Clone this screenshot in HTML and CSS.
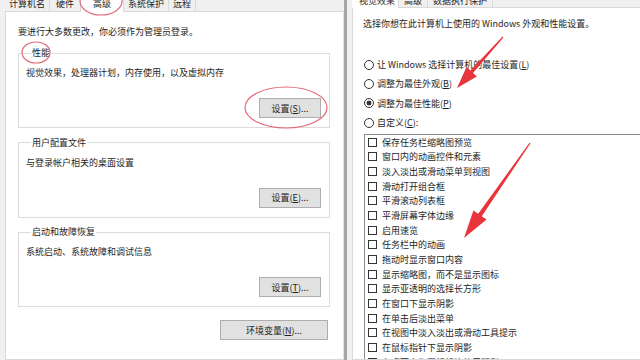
FILE: index.html
```html
<!DOCTYPE html>
<html lang="zh-CN">

<head>
    <meta charset="UTF-8">
    <meta name="viewport" content="width=device-width, initial-scale=1.0">
    <title>系统属性 - 性能选项</title>
    <link rel="stylesheet" href="styles.css">
</head>

<body>

    <div class="screen">
        <!-- 系统属性 / 高级 -->
        <div class="win win-system">
            <div class="tabs">
                <span class="tab">计算机名</span>
                <span class="tab tab-hw">硬件</span>
                <span class="tab tab-active tab-adv">高级</span>
                <span class="tab">系统保护</span>
                <span class="tab">远程</span>
            </div>
            <div class="panel">
                <p class="intro">要进行大多数更改，你必须作为管理员登录。</p>

                <fieldset class="group">
                    <legend>性能</legend>
                    <p class="desc">视觉效果，处理器计划，内存使用，以及虚拟内存</p>
                    <div class="actions"><button class="btn" type="button">设置(<u>S</u>)...</button></div>
                </fieldset>

                <fieldset class="group">
                    <legend>用户配置文件</legend>
                    <p class="desc">与登录帐户相关的桌面设置</p>
                    <div class="actions"><button class="btn" type="button">设置(<u>E</u>)...</button></div>
                </fieldset>

                <fieldset class="group">
                    <legend>启动和故障恢复</legend>
                    <p class="desc">系统启动、系统故障和调试信息</p>
                    <div class="actions"><button class="btn" type="button">设置(<u>T</u>)...</button></div>
                </fieldset>

                <div class="actions env"><button class="btn btn-wide" type="button">环境变量(<u>N</u>)...</button></div>
            </div>
        </div>

        <div class="win-edge"></div>

        <!-- 性能选项 / 视觉效果 -->
        <div class="win win-perf">
            <div class="tabs tabs-short">
                <span class="tab tab-active">视觉效果</span>
                <span class="tab">高级</span>
                <span class="tab">数据执行保护</span>
            </div>
            <div class="panel panel-perf">
                <p class="intro">选择你想在此计算机上使用的 Windows 外观和性能设置。</p>

                <ul class="radios">
                    <li><span class="radio"></span>让 Windows 选择计算机的最佳设置(<u>L</u>)</li>
                    <li><span class="radio"></span>调整为最佳外观(<u>B</u>)</li>
                    <li><span class="radio checked"></span>调整为最佳性能(<u>P</u>)</li>
                    <li><span class="radio"></span>自定义(<u>C</u>):</li>
                </ul>

                <ul class="checks">
                    <li><span class="box"></span>保存任务栏缩略图预览</li>
                    <li><span class="box"></span>窗口内的动画控件和元素</li>
                    <li><span class="box"></span>淡入淡出或滑动菜单到视图</li>
                    <li><span class="box"></span>滑动打开组合框</li>
                    <li><span class="box"></span>平滑滚动列表框</li>
                    <li><span class="box"></span>平滑屏幕字体边缘</li>
                    <li><span class="box"></span>启用速览</li>
                    <li><span class="box"></span>任务栏中的动画</li>
                    <li><span class="box"></span>拖动时显示窗口内容</li>
                    <li><span class="box"></span>显示缩略图，而不是显示图标</li>
                    <li><span class="box"></span>显示亚透明的选择长方形</li>
                    <li><span class="box"></span>在窗口下显示阴影</li>
                    <li><span class="box"></span>在单击后淡出菜单</li>
                    <li><span class="box"></span>在视图中淡入淡出或滑动工具提示</li>
                    <li><span class="box"></span>在鼠标指针下显示阴影</li>
                    <li><span class="box"></span>在桌面上为图标标签使用阴影</li>
                </ul>
            </div>
        </div>

        <!-- red annotations drawn over the screenshot -->
        <svg class="marks" width="640" height="360" viewBox="0 0 640 360">
            <g fill="none" stroke="#e2697a" stroke-width="1.2">
                <ellipse cx="101" cy="1" rx="21" ry="14" />
                <ellipse cx="36" cy="52.5" rx="14" ry="10.5" />
                <ellipse cx="286" cy="107.5" rx="41" ry="20.5" />
            </g>
            <g fill="#e8353b">
                <polygon points="503.4,37.4 473,72.9 476.9,76.4 457,88 466.5,67 470.4,70.5 502.6,36.6" />
                <polygon points="530.5,143.3 481.8,216.3 486.6,219.6 464,238 473.4,210.4 478.2,213.7 529.5,142.7" />
            </g>
        </svg>
    </div>

</body>

</html>
```

FILE: styles.css
```css
body {
    margin: 0;
    font-family: "Noto Sans CJK SC", sans-serif;
    font-size: 9px;
    color: #1e1e1e;
    background-color: #f0f0f0;
}

p,
ul {
    margin: 0;
    padding: 0;
    list-style: none;
}

.screen {
    position: relative;
    display: flex;
    width: 640px;
    height: 360px;
    overflow: hidden;
}

.win {
    display: flex;
    flex-direction: column;
    background-color: #f0f0f0;
}

.win-system {
    width: 344px;
    flex: none;
}

.win-edge {
    width: 3px;
    margin-right: 5px;
    flex: none;
    background-color: #a6a6a6;
}

.win-perf {
    flex: 1;
    min-width: 0;
}

/* tab strip, its top is cut off by the screenshot */
.tabs {
    display: flex;
    align-items: flex-end;
    height: 11px;
    padding-left: 5px;
    flex: none;
}

.tabs-short {
    height: 7px;
    padding-left: 0;
}

.tab {
    height: 14px;
    line-height: 14px;
    padding: 0 4px;
    border: 1px solid #d9d9d9;
    border-bottom: none;
    border-left: none;
    background-color: #f0f0f0;
    white-space: nowrap;
}

.tabs-short .tab {
    height: 10px;
    line-height: 8px;
    padding: 0 5px;
}

.tab-hw {
    padding: 0 6px;
}

.tab-adv {
    padding: 0 12px;
}

.tab-active {
    position: relative;
    height: 15px;
    margin-bottom: -1px;
    background-color: #fff;
}

.tabs-short .tab-active {
    height: 11px;
    padding: 0 3px 0 7px;
}

.panel {
    flex: 1;
    margin-left: 5px;
    padding: 14px 13px 0 12px;
    border: 1px solid #d9d9d9;
    border-right-color: #e3e3e3;
    background-color: #fff;
}

.panel-perf {
    margin-left: 0;
    padding: 10px 0 0 10px;
    border-right: none;
    overflow: hidden;
}

.intro {
    line-height: 12px;
    white-space: nowrap;
}

.group {
    margin: 9px 0 0;
    padding: 8px 8px 9px 7px;
    min-width: 0;
    border: 1px solid #dcdcdc;
}

.group + .group {
    margin-top: 8.5px;
}

.group legend {
    margin-left: 5px;
    padding: 0 1px;
    line-height: 12px;
}

.desc {
    line-height: 12px;
}

.actions {
    display: flex;
    justify-content: flex-end;
    margin-top: 19px;
}

.env {
    margin-top: 13px;
    margin-right: 2px;
}

.btn {
    width: 62px;
    height: 20px;
    padding: 0;
    font-family: inherit;
    font-size: 9px;
    color: #1e1e1e;
    background-color: #e1e1e1;
    border: 1px solid #adadad;
}

.btn-wide {
    width: 108px;
}

.radios {
    margin-top: 25px;
}

.radios li {
    display: flex;
    align-items: center;
    height: 19.3px;
    white-space: nowrap;
}

.radio {
    box-sizing: border-box;
    width: 10px;
    height: 10px;
    margin: 0 3px 0 1px;
    border: 1px solid #333;
    border-radius: 50%;
    background-color: #fff;
}

.radio.checked {
    background: radial-gradient(circle, #333 0 2.2px, #fff 2.7px);
}

.checks {
    width: 300px;
    height: 240px;
    margin: 1.5px 0 0 1px;
    padding-left: 3px;
    border: 1px solid #8c8c8c;
}

.checks li {
    display: flex;
    align-items: center;
    height: 14.7px;
    white-space: nowrap;
}

.box {
    box-sizing: border-box;
    width: 9px;
    height: 9px;
    margin-right: 5px;
    border: 1px solid #333;
    background-color: #fff;
}

.marks {
    position: absolute;
    top: 0;
    left: 0;
    pointer-events: none;
}
```
